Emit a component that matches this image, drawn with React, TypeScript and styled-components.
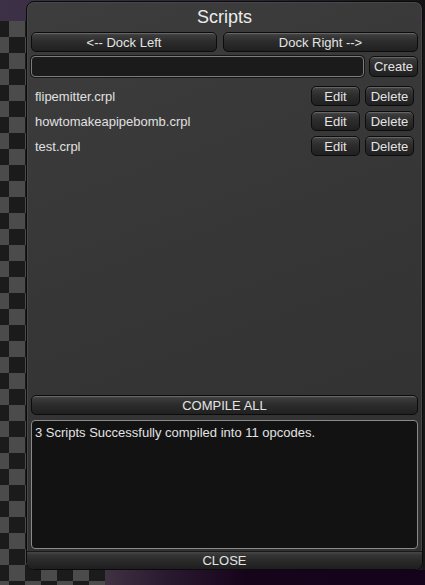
import React from "react";
import styled, { createGlobalStyle } from "styled-components";

const GlobalStyle = createGlobalStyle`
  html, body {
    margin: 0;
    padding: 0;
    width: 425px;
    height: 585px;
    overflow: hidden;
  }
  body {
    font-family: "Liberation Sans", Arial, sans-serif;
    background:
      linear-gradient(to right, #3c3146 0%, #2e2436 60%, #151016 100%) 0 0 / 100% 21px no-repeat,
      linear-gradient(to right, #3f3242 0px, #2a1a30 60px, #16041b 140px, #12021a 100%) 105px 570px / 100% 15px no-repeat,
      linear-gradient(#171717, #171717) 100% 0 / 3px 570px no-repeat,
      conic-gradient(#4b4b4b 25%, #1b1b1b 0 50%, #4b4b4b 0 75%, #1b1b1b 0) -7px 21px / 32px 32px,
      #161616;
  }
  * { box-sizing: border-box; }
`;

const Stage = styled.div`
  width: 425px;
  height: 585px;
  padding: 1px 2px 0 26px;
  display: flex;
  align-items: flex-start;
`;

const Panel = styled.div`
  width: 397px;
  height: 569px;
  display: flex;
  flex-direction: column;
  border: 1px solid #0b0b0b;
  border-radius: 8px;
  background: linear-gradient(160deg, #3d3d3d 0%, #363636 45%, #303030 100%);
  box-shadow: inset 0 0 0 1px #474747;
  overflow: hidden;
`;

const Title = styled.div`
  height: 30px;
  display: flex;
  align-items: center;
  justify-content: center;
  color: #ececec;
  font-size: 18px;
  padding-top: 1px;
`;

const Content = styled.div`
  flex: 1;
  display: flex;
  flex-direction: column;
  padding: 0 4px;
`;

const Button = styled.button<{ $h?: number }>`
  height: ${(p) => p.$h ?? 20}px;
  margin: 0;
  padding: 0;
  display: flex;
  align-items: center;
  justify-content: center;
  font-family: "Liberation Sans", Arial, sans-serif;
  font-size: 13px;
  color: #e4e4e4;
  border: 1px solid #0c0c0c;
  border-radius: 5px;
  background: linear-gradient(#575757 0px, #3c3c3c 2px, #2d2d2d 45%, #202020 100%);
  box-shadow: inset 0 1px 0 rgba(255, 255, 255, 0.12);
  cursor: pointer;
`;

const DockRow = styled.div`
  display: grid;
  grid-template-columns: 186px 1fr;
  gap: 6px;
`;

const InputRow = styled.div`
  display: flex;
  gap: 5px;
  margin-top: 4px;
  height: 21px;
`;

const NameInput = styled.input`
  flex: 1;
  height: 21px;
  margin: 0;
  background: #1b1b1b;
  border: 1px solid #7c7c7c;
  border-radius: 4px;
  box-shadow: 0 0 0 1px #161616;
  color: #ddd;
  font-family: "Liberation Sans", Arial, sans-serif;
  font-size: 13px;
  outline: none;
`;

const CreateButton = styled(Button)`
  width: 49px;
  height: 21px;
`;

const List = styled.div`
  display: flex;
  flex-direction: column;
  gap: 5px;
  margin-top: 9px;
  padding: 0 4px;
`;

const Row = styled.div`
  display: flex;
  align-items: center;
  gap: 5px;
  height: 20px;
`;

const FileName = styled.span`
  flex: 1;
  color: #e0e0e0;
  font-size: 13px;
`;

const SmallButton = styled(Button)`
  width: 49px;
`;

const Spacer = styled.div`
  flex: 1;
`;

const Output = styled.div`
  height: 129px;
  margin-top: 5px;
  margin-bottom: 2px;
  background: #121212;
  border: 1px solid #8a8a8a;
  border-radius: 4px;
  color: #e2e2e2;
  font-size: 13px;
  padding: 4px 3px;
`;

const CloseBar = styled.button`
  height: 18px;
  margin: 0;
  padding: 0;
  border: none;
  border-top: 1px solid #1a1a1a;
  background: linear-gradient(#474747 0px, #353535 3px, #2a2a2a 50%, #1e1e1e 100%);
  color: #e4e4e4;
  font-family: "Liberation Sans", Arial, sans-serif;
  font-size: 13px;
  display: flex;
  align-items: center;
  justify-content: center;
  cursor: pointer;
`;

const scripts = ["flipemitter.crpl", "howtomakeapipebomb.crpl", "test.crpl"];

export default function App() {
  return (
    <>
      <GlobalStyle />
      <Stage>
        <Panel>
          <Title>Scripts</Title>
          <Content>
            <DockRow>
              <Button>{"<-- Dock Left"}</Button>
              <Button>{"Dock Right -->"}</Button>
            </DockRow>
            <InputRow>
              <NameInput type="text" />
              <CreateButton>Create</CreateButton>
            </InputRow>
            <List>
              {scripts.map((s) => (
                <Row key={s}>
                  <FileName>{s}</FileName>
                  <SmallButton>Edit</SmallButton>
                  <SmallButton>Delete</SmallButton>
                </Row>
              ))}
            </List>
            <Spacer />
            <Button $h={20}>COMPILE ALL</Button>
            <Output>3 Scripts Successfully compiled into 11 opcodes.</Output>
          </Content>
          <CloseBar>CLOSE</CloseBar>
        </Panel>
      </Stage>
    </>
  );
}
